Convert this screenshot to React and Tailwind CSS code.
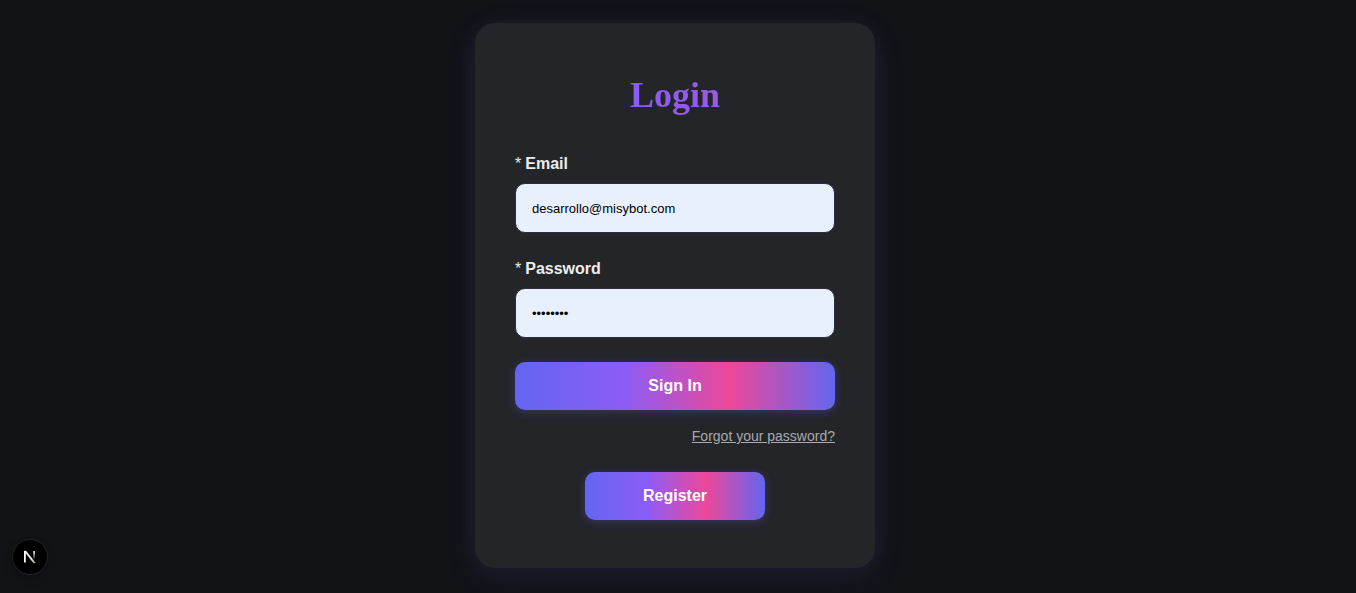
function Field({ id, label, type, value }) {
  return (
    <div className="flex flex-col gap-2">
      <label htmlFor={id} className="flex gap-1 text-base leading-[23px] font-bold text-[#ededed]">
        <span className="font-normal">*</span>
        {label}
      </label>
      <input
        id={id}
        type={type}
        defaultValue={value}
        className="h-[50px] w-full rounded-[10px] border border-[#2d2e3a] bg-[#e8f0fe] px-4 text-[13px] text-black outline-none"
      />
    </div>
  );
}

const gradient =
  "h-12 rounded-[10px] bg-[linear-gradient(90deg,#6366f1,#8b5cf6_34%,#ec4899_67%,#6366f1)] text-base font-bold text-white shadow-[0_2px_8px_rgba(99,102,241,0.3)]";

export default function App() {
  return (
    <main className="flex min-h-screen flex-col items-center bg-[#121317] pt-[23px] pr-1.5 pb-6 font-['Liberation_Sans',Arial,sans-serif]">
      <form
        onSubmit={(e) => e.preventDefault()}
        className="flex w-full max-w-[400px] flex-col rounded-[20px] bg-[#242529] px-10 py-12 shadow-[0_8px_32px_rgba(99,102,241,0.1),0_0_32px_rgba(255,255,255,0.04)]"
      >
        <h1 className="mb-8 bg-[linear-gradient(90deg,#6366f1,#8b5cf6_40%,#9c59e4_64%,#ec4899)] bg-clip-text text-center font-['Liberation_Serif',serif] text-[36px] leading-[49px] font-bold text-transparent">
          Login
        </h1>
        <div className="flex flex-col gap-6">
          <Field id="email" label="Email" type="email" value="desarrollo@misybot.com" />
          <Field id="password" label="Password" type="password" value="password" />
          <button type="submit" className={gradient}>Sign In</button>
        </div>
        <a href="#forgot" className="mt-4 self-end text-sm leading-5 text-[#a9a9ad] underline">
          Forgot your password?
        </a>
        <button type="button" className={`${gradient} mt-[26px] w-[180px] self-center`}>Register</button>
      </form>
      <button
        type="button"
        aria-label="Open Next.js Dev Tools"
        className="fixed bottom-[18px] left-3 flex size-9 items-center justify-center rounded-full border border-[#242426] bg-black shadow-[0_4px_10px_rgba(0,0,0,0.2)]"
      >
        <svg width="14" height="14" viewBox="0 0 14 14" fill="none" aria-hidden="true">
          <defs>
            <linearGradient id="stem" x1="0" y1="1" x2="0" y2="10" gradientUnits="userSpaceOnUse">
              <stop offset="0.2" stopColor="#fff" stopOpacity="0.8" />
              <stop offset="1" stopColor="#fff" stopOpacity="0" />
            </linearGradient>
            <linearGradient id="slash" x1="7" y1="7" x2="12" y2="13" gradientUnits="userSpaceOnUse">
              <stop offset="0.3" stopColor="#fff" />
              <stop offset="1" stopColor="#fff" stopOpacity="0.5" />
            </linearGradient>
          </defs>
          <path d="M1 1H3L12.5 13H10.6L2.4 2.6Z" fill="url(#slash)" stroke="url(#slash)" strokeWidth="0.4" />
          <path d="M1 1H2.8V12.5H1Z" fill="#fff" />
          <path d="M10.2 1H12V10H10.2Z" fill="url(#stem)" />
        </svg>
      </button>
    </main>
  );
}
